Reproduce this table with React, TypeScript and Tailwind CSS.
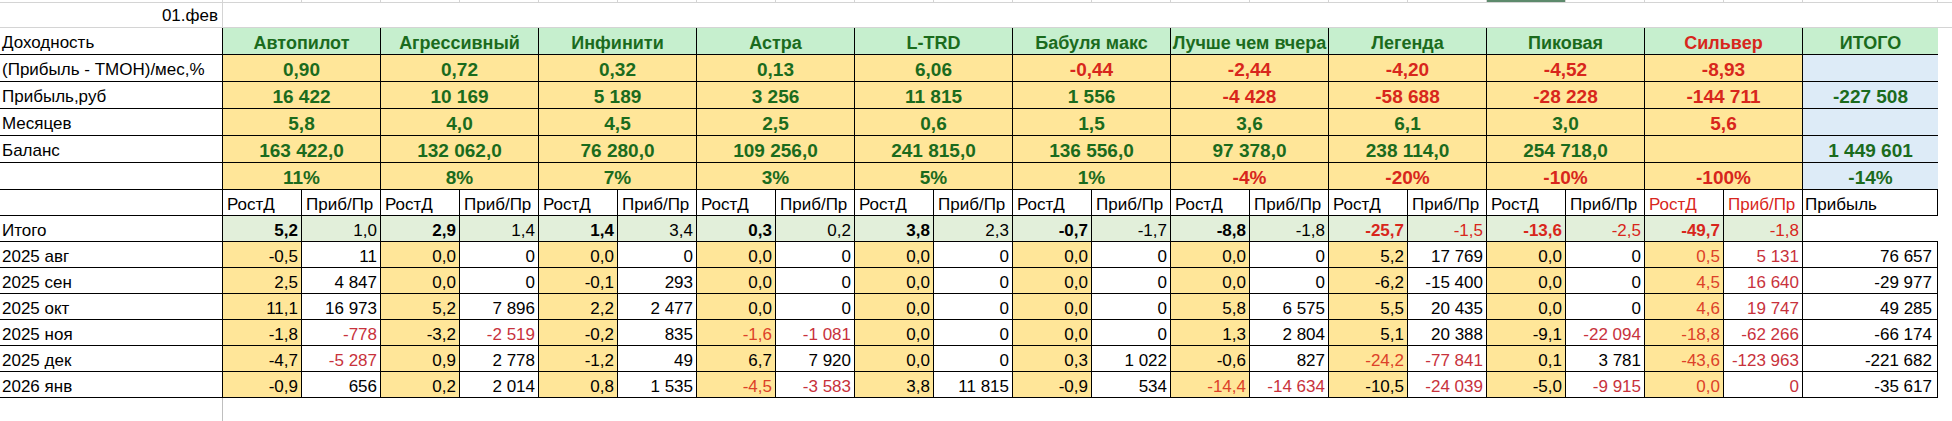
import React from "react";

const groups = [
  "Автопилот",
  "Агрессивный",
  "Инфинити",
  "Астра",
  "L-TRD",
  "Бабуля макс",
  "Лучше чем вчера",
  "Легенда",
  "Пиковая",
  "*Сильвер",
];

// "*" in front of a value = red text
const topRows = [
  {
    label: "(Прибыль - ТМОН)/мес,%",
    vals: ["0,90", "0,72", "0,32", "0,13", "6,06", "*-0,44", "*-2,44", "*-4,20", "*-4,52", "*-8,93"],
    total: "",
  },
  {
    label: "Прибыль,руб",
    vals: ["16 422", "10 169", "5 189", "3 256", "11 815", "1 556", "*-4 428", "*-58 688", "*-28 228", "*-144 711"],
    total: "-227 508",
  },
  {
    label: "Месяцев",
    vals: ["5,8", "4,0", "4,5", "2,5", "0,6", "1,5", "3,6", "6,1", "3,0", "*5,6"],
    total: "",
  },
  {
    label: "Баланс",
    vals: ["163 422,0", "132 062,0", "76 280,0", "109 256,0", "241 815,0", "136 556,0", "97 378,0", "238 114,0", "254 718,0", ""],
    total: "1 449 601",
  },
  {
    label: "",
    vals: ["11%", "8%", "7%", "3%", "5%", "1%", "*-4%", "*-20%", "*-10%", "*-100%"],
    total: "-14%",
  },
];

const itogo = ["5,2", "1,0", "2,9", "1,4", "1,4", "3,4", "0,3", "0,2", "3,8", "2,3", "-0,7", "-1,7", "-8,8", "-1,8", "*-25,7", "*-1,5", "*-13,6", "*-2,5", "*-49,7", "*-1,8"];

const months = [
  {
    label: "2025 авг",
    vals: ["-0,5", "11", "0,0", "0", "0,0", "0", "0,0", "0", "0,0", "0", "0,0", "0", "0,0", "0", "5,2", "17 769", "0,0", "0", "*0,5", "*5 131"],
    total: "76 657",
  },
  {
    label: "2025 сен",
    vals: ["2,5", "4 847", "0,0", "0", "-0,1", "293", "0,0", "0", "0,0", "0", "0,0", "0", "0,0", "0", "-6,2", "-15 400", "0,0", "0", "*4,5", "*16 640"],
    total: "-29 977",
  },
  {
    label: "2025 окт",
    vals: ["11,1", "16 973", "5,2", "7 896", "2,2", "2 477", "0,0", "0", "0,0", "0", "0,0", "0", "5,8", "6 575", "5,5", "20 435", "0,0", "0", "*4,6", "*19 747"],
    total: "49 285",
  },
  {
    label: "2025 ноя",
    vals: ["-1,8", "*-778", "-3,2", "*-2 519", "-0,2", "835", "*-1,6", "*-1 081", "0,0", "0", "0,0", "0", "1,3", "2 804", "5,1", "20 388", "-9,1", "*-22 094", "*-18,8", "*-62 266"],
    total: "-66 174",
  },
  {
    label: "2025 дек",
    vals: ["-4,7", "*-5 287", "0,9", "2 778", "-1,2", "49", "6,7", "7 920", "0,0", "0", "0,3", "1 022", "-0,6", "827", "*-24,2", "*-77 841", "0,1", "3 781", "*-43,6", "*-123 963"],
    total: "-221 682",
  },
  {
    label: "2026 янв",
    vals: ["-0,9", "656", "0,2", "2 014", "0,8", "1 535", "*-4,5", "*-3 583", "3,8", "11 815", "-0,9", "534", "*-14,4", "*-14 634", "-10,5", "*-24 039", "-5,0", "*-9 915", "*0,0", "*0"],
    total: "-35 617",
  },
];

const isRed = (s: string) => s.startsWith("*");
const clean = (s: string) => s.replace(/^\*/, "");

const grid = "grid grid-cols-[223px_repeat(20,79px)_135px_1fr]";
const subs = Array.from({ length: 20 }, (_, i) => i);

export default function App() {
  return (
    <div className="w-[1952px] h-[421px] overflow-hidden bg-white text-black font-['Liberation_Sans',Arial,sans-serif]">
      {/* column header remnant */}
      <div className={`${grid} h-[3px]`}>
        <div className="border-r border-b border-[#d4d4d4]" />
        {subs.map((i) => (
          <div key={i} className="relative border-r border-b border-[#d4d4d4]">
            {i === 16 && <div className="absolute left-0 right-0 top-0 h-[2px] bg-[#5d8a6c]" />}
          </div>
        ))}
        <div className="border-r border-b border-[#d4d4d4]" />
        <div className="border-b border-[#d4d4d4]" />
      </div>

      {/* date row */}
      <div className={`${grid} h-[25px]`}>
        <div className="flex items-end justify-end pr-[4px] pb-[3px] text-[17px] leading-none border-r border-b border-[#d4d4d4]">
          01.фев
        </div>
        <div className="col-span-22 border-b border-[#d4d4d4]" />
      </div>

      {/* group header */}
      <div className={`${grid} h-[27px]`}>
        <div className="flex items-end pl-[2px] pb-[3px] text-[17px] leading-none border-r border-b border-black">
          Доходность
        </div>
        {groups.map((g) => (
          <div
            key={g}
            className={`col-span-2 flex items-end justify-center pb-[2px] overflow-hidden whitespace-nowrap bg-[#c6efce] border-r border-b border-black text-[18px] leading-none font-bold ${
              isRed(g) ? "text-[#d8261c]" : "text-[#1b6b1d]"
            }`}
          >
            {clean(g)}
          </div>
        ))}
        <div className="flex items-end justify-center pb-[2px] bg-[#c6efce] border-b border-black text-[18px] leading-none font-bold text-[#1b6b1d]">
          ИТОГО
        </div>
        <div />
      </div>

      {/* summary rows */}
      {topRows.map((r, ri) => (
        <div key={ri} className={`${grid} h-[27px]`}>
          <div className="flex items-end pl-[2px] pb-[3px] text-[17px] leading-none whitespace-nowrap border-r border-b border-black">
            {r.label}
          </div>
          {r.vals.map((v, i) => (
            <div
              key={i}
              className={`col-span-2 flex items-end justify-center pb-[2px] bg-[#ffe699] border-r border-b border-black text-[19px] leading-none font-bold whitespace-nowrap ${
                isRed(v) ? "text-[#d8261c]" : "text-[#1b6b1d]"
              }`}
            >
              {clean(v)}
            </div>
          ))}
          <div className="flex items-end justify-center pb-[2px] bg-[#ddebf7] border-b border-black text-[19px] leading-none font-bold text-[#1b6b1d] whitespace-nowrap">
            {r.total}
          </div>
          <div />
        </div>
      ))}

      {/* sub headers */}
      <div className={`${grid} h-[26px] text-[17px] leading-none`}>
        <div className="border-r border-b border-black" />
        {subs.map((i) => (
          <div
            key={i}
            className={`flex items-end pl-[4px] pb-[2px] overflow-hidden whitespace-nowrap border-r border-b border-black ${
              i >= 18 ? "text-[#d8261c]" : ""
            }`}
          >
            {i % 2 === 0 ? "РостД" : "Приб/Пр"}
          </div>
        ))}
        <div className="flex items-end pl-[2px] pb-[2px] border-r border-b border-black">Прибыль</div>
        <div />
      </div>

      {/* Итого */}
      <div className={`${grid} h-[26px] text-[17px] leading-none`}>
        <div className="flex items-end pl-[2px] pb-[2px] border-r border-b border-black">Итого</div>
        {itogo.map((v, i) => (
          <div
            key={i}
            className={`flex items-end justify-end pr-[3px] pb-[2px] bg-[#e2efda] border-r border-b border-black ${
              i % 2 === 0 ? "font-bold" : ""
            } ${isRed(v) ? "text-[#d8261c]" : ""}`}
          >
            {clean(v)}
          </div>
        ))}
        <div className="border-b border-black" />
        <div />
      </div>

      {/* monthly rows */}
      {months.map((m) => (
        <div key={m.label} className={`${grid} h-[26px] text-[17px] leading-none`}>
          <div className="flex items-end pl-[2px] pb-[2px] border-r border-b border-black">{m.label}</div>
          {m.vals.map((v, i) => (
            <div
              key={i}
              className={`flex items-end justify-end pr-[3px] pb-[2px] whitespace-nowrap border-r border-b border-black ${
                i % 2 === 0 ? "bg-[#ffe699]" : ""
              } ${isRed(v) ? (i % 2 === 0 ? "text-[#dc4128]" : "text-[#c8323c]") : ""}`}
            >
              {clean(v)}
            </div>
          ))}
          <div className="flex items-end justify-end pr-[5px] pb-[2px] border-r border-b border-black">{m.total}</div>
          <div />
        </div>
      ))}

      {/* empty area below */}
      <div className={`${grid} h-[23px]`}>
        <div className="border-r border-[#bfbfbf]" />
      </div>
    </div>
  );
}
